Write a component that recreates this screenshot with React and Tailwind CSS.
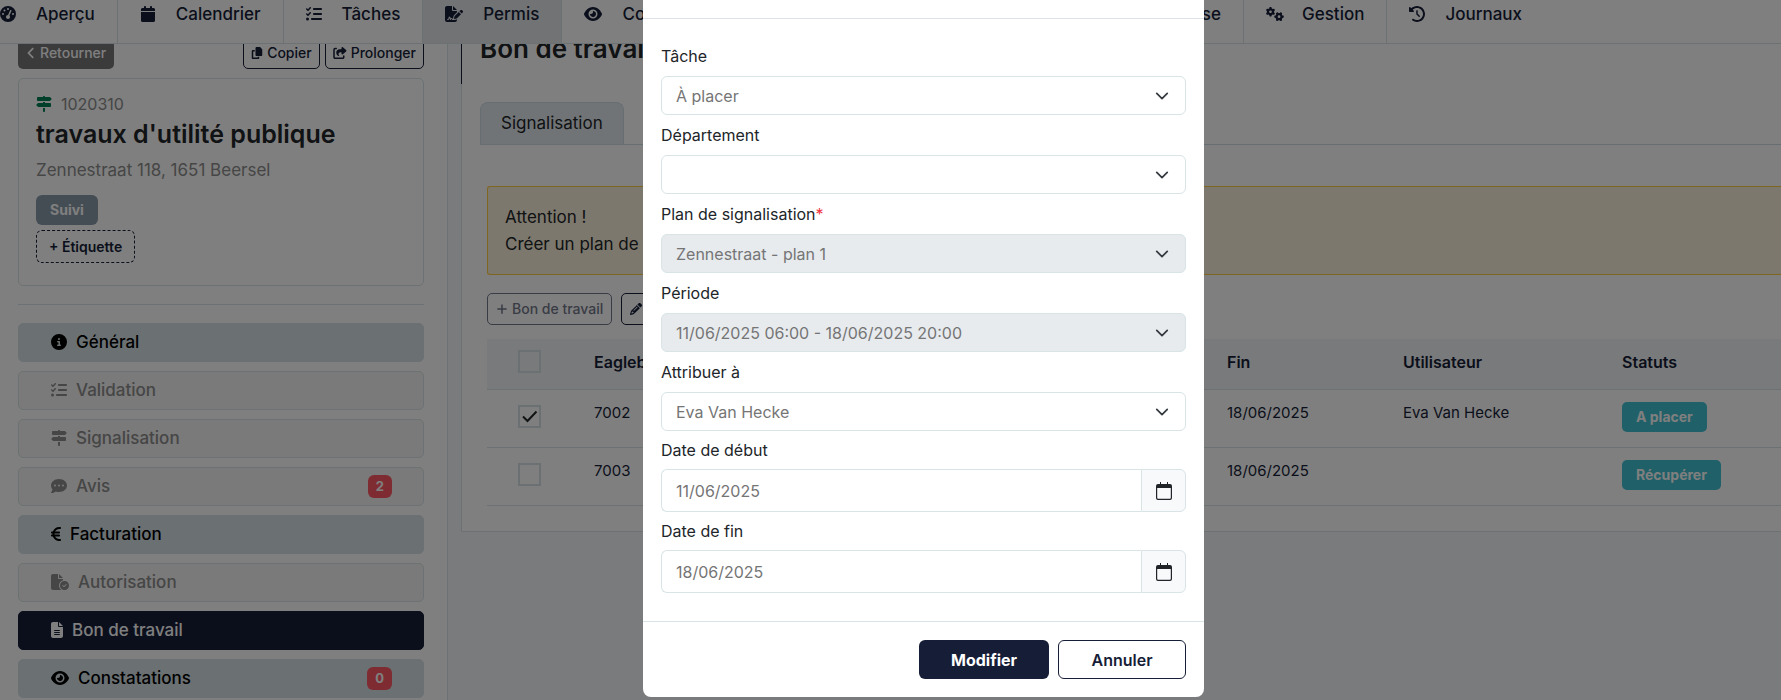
import React from "react";
import {
  FaGaugeHigh,
  FaCalendar,
  FaListCheck,
  FaFileSignature,
  FaEye,
  FaGears,
  FaClockRotateLeft,
  FaCopy,
  FaShareFromSquare,
  FaSignsPost,
  FaCircleInfo,
  FaCommentDots,
  FaEuroSign,
  FaFileCircleCheck,
  FaFileLines,
  FaAngleLeft,
  FaBuilding,
  FaPlus,
  FaPencil,
} from "react-icons/fa6";

function NavItem({ icon: Icon, iconWidth = "w-4", label, active, first, className = "" }) {
  return (
    <a
      href="#"
      className={`flex h-full shrink-0 items-center gap-5 whitespace-nowrap border-r border-[#d8e4e6] pb-4 pr-[22px] ${
        first ? "pl-0" : "pl-[22px]"
      } ${active ? "bg-[#e2e6ea]" : ""} ${className}`}
    >
      <Icon className={`h-4 shrink-0 ${iconWidth}`} />
      {label}
    </a>
  );
}

function TopNav() {
  return (
    <nav className="sticky top-0 z-10 flex h-11 shrink-0 border-b border-[#d8e4e6] bg-white text-[17px] font-medium leading-6 text-[#161d37]">
      <div className="flex w-[1244px] shrink-0">
        <NavItem first icon={FaGaugeHigh} label="Aperçu" />
        <NavItem icon={FaCalendar} label="Calendrier" />
        <NavItem icon={FaListCheck} label="Tâches" />
        <NavItem icon={FaFileSignature} iconWidth="w-[18px]" label="Permis" active />
        <NavItem icon={FaEye} iconWidth="w-[18px]" label="Constatations" />
        <NavItem icon={FaBuilding} label="Entreprise" className="ml-auto" />
      </div>
      <NavItem icon={FaGears} iconWidth="w-[18px]" label="Gestion" className="gap-[18px]" />
      <NavItem icon={FaClockRotateLeft} label="Journaux" className="border-r-0" />
    </nav>
  );
}

const steps = [
  { label: "Général", icon: FaCircleInfo, iconWidth: "w-4", kind: "done" },
  { label: "Validation", icon: FaListCheck, iconWidth: "w-4", kind: "muted" },
  { label: "Signalisation", icon: FaSignsPost, iconWidth: "w-4", kind: "muted" },
  { label: "Avis", icon: FaCommentDots, iconWidth: "w-4", kind: "muted", count: 2 },
  { label: "Facturation", icon: FaEuroSign, iconWidth: "w-2.5", kind: "done" },
  { label: "Autorisation", icon: FaFileCircleCheck, iconWidth: "w-[18px]", kind: "muted" },
  { label: "Bon de travail", icon: FaFileLines, iconWidth: "w-3", kind: "active" },
  { label: "Constatations", icon: FaEye, iconWidth: "w-[18px]", kind: "done", count: 0 },
];

const stepStyles = {
  done: "border-[#d6e2e6] bg-[#d6e2e6] text-black",
  muted: "border-[#d8e4e6] bg-[#f4f4f4] text-[#8c8c8c]",
  active: "border-[#161d37] bg-[#161d37] text-white",
};

function Sidebar() {
  return (
    <aside className="w-[448px] shrink-0 border-r border-[#d8e4e6] bg-white pl-[18px] pr-[23px]">
      <div className="flex gap-[5px] text-sm font-medium text-[#161d37]">
        <button className="mr-auto flex h-8 items-center gap-1 rounded-[5px] bg-[#767676] px-2 text-white">
          <FaAngleLeft className="h-3.5 w-2.5" />
          Retourner
        </button>
        <button className="flex h-8 items-center gap-1 rounded-[5px] border border-[#161d37] px-[7px]">
          <FaCopy className="size-3" />
          Copier
        </button>
        <button className="flex h-8 items-center gap-1 rounded-[5px] border border-[#161d37] px-[7px]">
          <FaShareFromSquare className="h-3 w-3.5" />
          Prolonger
        </button>
      </div>

      <section className="mt-[9px] rounded-[5px] border border-[#d8e4e6] px-[17px] pb-[22px] pt-[13px]">
        <p className="flex items-center gap-[9px] text-base leading-6 text-[#8c8c8c]">
          <FaSignsPost className="size-4 text-[#008054]" />
          1020310
        </p>
        <h1 className="text-[25px] font-semibold leading-9 text-[#212529]">
          travaux d'utilité publique
        </h1>
        <p className="mt-1.5 text-[17px] leading-6 text-[#8c8c8c]">Zennestraat 118, 1651 Beersel</p>
        <span className="mt-[13px] flex h-[30px] w-fit items-center rounded-md bg-[#8a9ba9] px-3.5 text-sm font-bold text-white">
          Suivi
        </span>
        <button className="mt-[5px] flex h-[33px] items-center rounded-md border border-dashed border-[#161d37] px-3 text-sm font-semibold text-[#161d37]">
          + Étiquette
        </button>
      </section>

      <hr className="mb-[18px] mt-[18px] border-[#d8e4e6]" />

      <div className="flex flex-col gap-[9px]">
        {steps.map(({ label, icon: Icon, iconWidth, kind, count }) => (
          <button
            key={label}
            className={`flex h-[39px] items-center gap-[9px] rounded-[5px] border pb-px pl-8 pr-[31px] text-[17px] font-medium leading-6 ${stepStyles[kind]}`}
          >
            <Icon className={`h-4 shrink-0 ${iconWidth}`} />
            {label}
            {count !== undefined && (
              <span className="ml-auto flex h-[23px] items-center rounded-md bg-[#ff5765] px-2 text-[13px] font-bold leading-4 text-white">
                {count}
              </span>
            )}
          </button>
        ))}
      </div>
    </aside>
  );
}

function Tick({ label, defaultChecked }) {
  return (
    <span className="grid size-[23px] place-items-center">
      <input
        type="checkbox"
        aria-label={label}
        defaultChecked={defaultChecked}
        className="peer col-start-1 row-start-1 size-[23px] appearance-none border-2 border-[#d6e2e6]"
      />
      <svg
        viewBox="0 0 16 16"
        className="pointer-events-none invisible col-start-1 row-start-1 size-4 fill-none stroke-[#212529] stroke-2 peer-checked:visible"
      >
        <path d="M1 8.5 5.5 13 14.5 3.5" />
      </svg>
    </span>
  );
}

const orders = [
  { id: "7002", start: "11/06/2025", end: "18/06/2025", user: "Eva Van Hecke", status: "A placer", checked: true },
  { id: "7003", start: "11/06/2025", end: "18/06/2025", user: "", status: "Récupérer", checked: false },
];

function WorkOrders() {
  return (
    <main className="min-w-0 flex-1 pl-[13px]">
      <div className="border-b border-l border-[#d8e4e6] bg-white">
        <header className="-ml-px flex h-[47px] border-l border-[#161d37] pl-[18px]">
          <h2 className="text-[26px] font-semibold leading-6 text-[#212529]">Bon de travail</h2>
        </header>
        <div className="ml-[18px] mt-[18px] flex border-b border-[#cfdde3]">
          <button className="h-[42px] rounded-t-lg border border-b-0 border-[#cfdde3] bg-[#e2e9ed] px-5 text-[17px] text-[#212529]">
            Signalisation
          </button>
        </div>

        <div className="ml-[25px] pb-[25px] pt-[41px]">
          <div className="rounded-l-[3px] border border-r-0 border-[#ffcc40] bg-[#fbf1da] px-[17px] pb-4 pt-[17px] text-[17px] leading-[27px] text-[#212529]">
            <p>Attention !</p>
            <p>Créer un plan de signalisation</p>
          </div>

          <div className="mt-[18px] flex gap-[9px] text-sm">
            <button
              disabled
              className="flex h-8 items-center gap-1 rounded-[5px] border border-[#73778a] px-2 font-medium text-[#73778a]"
            >
              <FaPlus className="size-3" />
              Bon de travail
            </button>
            <button
              aria-label="Modifier"
              className="flex h-8 items-center rounded-[5px] border border-[#161d37] px-2 text-[#161d37]"
            >
              <FaPencil className="size-3" />
            </button>
          </div>

          <table className="mt-3.5 w-full table-fixed border-collapse text-left text-[15px] leading-6 text-[#161d37]">
            <colgroup>
              <col className="w-[89px]" />
              <col className="w-[240px]" />
              <col className="w-[393px]" />
              <col className="w-[176px]" />
              <col className="w-[219px]" />
              <col />
            </colgroup>
            <thead className="text-base leading-6">
              <tr className="h-[50px] border-b border-[#d8e4e6] bg-[#f3f5f8]">
                <th className="pb-1 pl-[31px]">
                  <Tick label="Tout sélectionner" />
                </th>
                <th className="px-[18px] pb-1 font-semibold">Eaglebe</th>
                <th className="px-[18px] pb-1 font-semibold">Début</th>
                <th className="px-[18px] pb-1 font-semibold">Fin</th>
                <th className="px-[18px] pb-1 font-semibold">Utilisateur</th>
                <th className="px-[18px] pb-1 font-semibold">Statuts</th>
              </tr>
            </thead>
            <tbody>
              {orders.map((order) => (
                <tr key={order.id} className="h-[58px] border-b border-[#d8e4e6] align-top">
                  <td className="pl-[31px] pt-[15px]">
                    <Tick label={`Bon ${order.id}`} defaultChecked={order.checked} />
                  </td>
                  <td className="px-[18px] pt-[11px]">{order.id}</td>
                  <td className="px-[18px] pt-[11px]">{order.start}</td>
                  <td className="px-[18px] pt-[11px]">{order.end}</td>
                  <td className="px-[18px] pt-[11px]">{order.user}</td>
                  <td className="px-[18px] pt-3">
                    <span className="flex h-[30px] w-fit items-center rounded-[5px] bg-[#40c0d0] px-3.5 text-sm font-bold leading-4 text-white">
                      {order.status}
                    </span>
                  </td>
                </tr>
              ))}
            </tbody>
          </table>
        </div>
      </div>
    </main>
  );
}

function SelectField({ id, label, value, required, disabled }) {
  return (
    <div>
      <label htmlFor={id} className="flex h-10 items-center">
        {label}
        {required && <span className="text-[#ef3340]">*</span>}
      </label>
      <div className="grid items-center">
        <select
          id={id}
          disabled={disabled}
          defaultValue={value}
          className="col-start-1 row-start-1 h-[39px] w-full appearance-none rounded-md border border-[#d8e4e6] bg-white pl-3.5 pr-10 text-[#757575] disabled:bg-[#e7ebee] disabled:opacity-100"
        >
          <option value={value}>{value}</option>
        </select>
        <svg
          viewBox="0 0 16 16"
          className="pointer-events-none col-start-1 row-start-1 mr-[17px] size-3.5 justify-self-end fill-none stroke-[#343a40] stroke-2"
          strokeLinecap="round"
          strokeLinejoin="round"
        >
          <path d="m2 5 6 6 6-6" />
        </svg>
      </div>
    </div>
  );
}

function DateField({ id, label, value }) {
  return (
    <div>
      <label htmlFor={id} className="flex h-[38px] items-center">
        {label}
      </label>
      <div className="flex h-[43px]">
        <input
          id={id}
          type="text"
          defaultValue={value}
          className="min-w-0 flex-1 rounded-l-md border border-r-0 border-[#d8e4e6] bg-white px-3.5 text-[#757575]"
        />
        <button
          type="button"
          aria-label={`Choisir : ${label}`}
          className="grid w-[45px] place-items-center rounded-r-md border border-[#d8e4e6] bg-[#f8f9fb]"
        >
          <svg viewBox="0 0 16 18" className="h-[18px] w-4" fill="#212529">
            <path
              fillRule="evenodd"
              d="M4 0h1v2h6V0h1v2h2a2 2 0 0 1 2 2v12a2 2 0 0 1-2 2H2a2 2 0 0 1-2-2V4a2 2 0 0 1 2-2h2zM1.200 6v9.800a1 1 0 0 0 1 1h11.600a1 1 0 0 0 1-1V6z"
            />
          </svg>
        </button>
      </div>
    </div>
  );
}

function EditDialog() {
  return (
    <div className="fixed inset-0 z-20 flex items-start justify-center overflow-hidden bg-black/50 pl-[66px]">
      <div
        role="dialog"
        aria-modal="true"
        aria-label="Modifier le bon de travail"
        className="w-full max-w-[561px] rounded-b-lg bg-white text-base leading-6 text-[#212529]"
      >
        <div className="h-[19px] border-b border-[#dee2e6]" />
        <form className="px-[18px] pb-7 pt-[17px]">
          <SelectField id="task" label="Tâche" value="À placer" />
          <SelectField id="department" label="Département" value="" />
          <SelectField id="plan" label="Plan de signalisation" value="Zennestraat - plan 1" required disabled />
          <SelectField id="period" label="Période" value="11/06/2025 06:00 - 18/06/2025 20:00" disabled />
          <SelectField id="assignee" label="Attribuer à" value="Eva Van Hecke" />
          <DateField id="start" label="Date de début" value="11/06/2025" />
          <DateField id="end" label="Date de fin" value="18/06/2025" />
        </form>
        <footer className="flex justify-end gap-[9px] border-t border-[#d8e4e6] p-[18px]">
          <button className="h-[39px] w-[130px] rounded-md bg-[#161d37] font-bold text-white">Modifier</button>
          <button className="h-[39px] w-[128px] rounded-md border border-[#161d37] font-semibold text-[#161d37]">
            Annuler
          </button>
        </footer>
      </div>
    </div>
  );
}

export default function App() {
  return (
    <div className="flex min-h-screen flex-col overflow-x-clip bg-[#f5f7fa] font-['Inter',sans-serif]">
      <TopNav />
      <div className="-mt-[7px] flex flex-1">
        <Sidebar />
        <WorkOrders />
      </div>
      <EditDialog />
    </div>
  );
}
